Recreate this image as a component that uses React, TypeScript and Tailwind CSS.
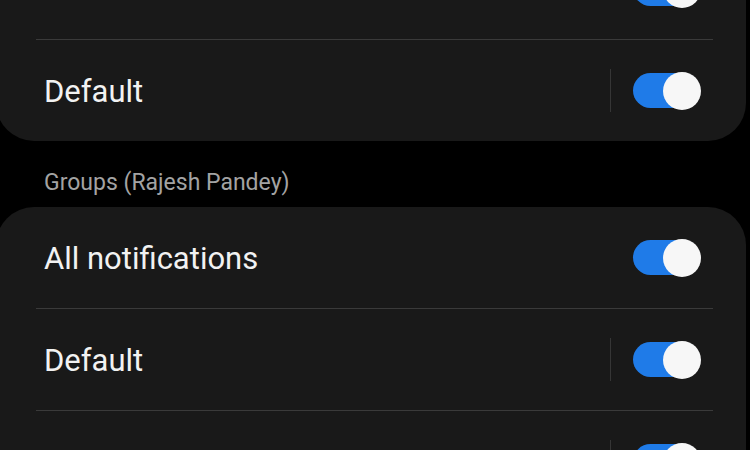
import { useState } from 'react';

type RowProps = { label: string; divided?: boolean };

function Toggle() {
  const [on, setOn] = useState(true);
  return (
    <button
      onClick={() => setOn(v => !v)}
      className={`relative w-[67px] h-[35px] rounded-full ${on ? 'bg-[#1f7be8]' : 'bg-[#555]'}`}
      aria-label="toggle"
    >
      <span
        className={`absolute top-[-1.5px] w-[38px] h-[38px] rounded-full bg-[#f7f7f7] ${on ? 'right-[-1px]' : 'left-[-1px]'}`}
      />
    </button>
  );
}

function Row({ label, divided }: RowProps) {
  return (
    <div className="flex items-center h-[101px] pl-[48px] pr-[46px]">
      <span className="flex-1 text-[31px] text-[#f2f2f2] leading-none pt-[2px]">{label}</span>
      {divided && <div className="w-px h-[43px] bg-[#363636] mr-[22px]" />}
      <Toggle />
    </div>
  );
}

function Divider() {
  return <div className="h-px bg-[#3a3a3a] ml-[40px] mr-[33px]" />;
}

export default function App() {
  return (
    <div className="w-[750px] h-[450px] bg-black overflow-hidden" style={{ fontFamily: 'Roboto, "Noto Sans", sans-serif' }}>
      <div className="-mt-[62px] -ml-[4px] w-[750px] rounded-[38px] bg-[#191919]">
        <Row label="All notifications" />
        <Divider />
        <Row label="Default" divided />
      </div>
      <div className="h-[66px] pl-[44px] pt-[30px]">
        <span className="block text-[23px] leading-[24px] text-[#a3a3a3]">Groups (Rajesh Pandey)</span>
      </div>
      <div className="-ml-[4px] w-[750px] rounded-[38px] bg-[#191919]">
        <Row label="All notifications" />
        <Divider />
        <Row label="Default" divided />
        <Divider />
        <Row label="Mentions" divided />
      </div>
    </div>
  );
}
